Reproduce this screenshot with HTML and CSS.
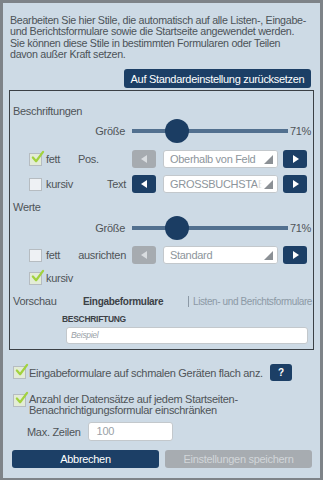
FILE: index.html
```html
<!DOCTYPE html>
<html>
<head>
    <title>Stile</title>
    <link rel="stylesheet" href="styles.css">
</head>
<body>
<div class="frame">
    <p class="intro">Bearbeiten Sie hier Stile, die automatisch auf alle Listen-, Eingabe-<br>und Berichtsformulare sowie die Startseite angewendet werden.<br>Sie können diese Stile in bestimmten Formularen oder Teilen<br>davon außer Kraft setzen.</p>
    <div class="reset-row"><button class="btn reset">Auf Standardeinstellung zurücksetzen</button></div>

    <div class="panel">
        <div class="title t1">Beschriftungen</div>
        <div class="slider-row s1">
            <span class="lbl">Größe</span>
            <div class="track"><span class="thumb"></span></div>
            <span class="pct">71%</span>
        </div>
        <div class="row r1">
            <label class="cb-wrap"><span class="cb checked"><svg viewBox="0 0 14 14"><path d="M2 7 L5.5 11 L13 1" /></svg></span>fett</label>
            <span class="lbl left">Pos.</span>
            <div class="ctl">
                <span class="nav off"><i class="tri-l"></i></span>
                <span class="select">Oberhalb von Feld</span>
                <span class="nav"><i class="tri-r"></i></span>
            </div>
        </div>
        <div class="row r2">
            <label class="cb-wrap"><span class="cb"></span>kursiv</label>
            <span class="lbl">Text</span>
            <div class="ctl">
                <span class="nav"><i class="tri-l"></i></span>
                <span class="select">GROSSBUCHSTABEN</span>
                <span class="nav"><i class="tri-r"></i></span>
            </div>
        </div>

        <div class="title t2">Werte</div>
        <div class="slider-row s2">
            <span class="lbl">Größe</span>
            <div class="track"><span class="thumb"></span></div>
            <span class="pct">71%</span>
        </div>
        <div class="row r3">
            <label class="cb-wrap"><span class="cb"></span>fett</label>
            <span class="lbl">ausrichten</span>
            <div class="ctl">
                <span class="nav off"><i class="tri-l"></i></span>
                <span class="select">Standard</span>
                <span class="nav"><i class="tri-r"></i></span>
            </div>
        </div>
        <div class="row r4">
            <label class="cb-wrap"><span class="cb checked"><svg viewBox="0 0 14 14"><path d="M2 7 L5.5 11 L13 1" /></svg></span>kursiv</label>
        </div>

        <div class="preview-tabs">
            <span class="pv-label">Vorschau</span>
            <span class="tab active">Eingabeformulare</span>
            <span class="tab">Listen- und Berichtsformulare</span>
        </div>
        <div class="pv-caption">BESCHRIFTUNG</div>
        <div class="pv-input">Beispiel</div>
    </div>

    <div class="opt o1">
        <span class="cb checked"><svg viewBox="0 0 14 14"><path d="M2 7 L5.5 11 L13 1" /></svg></span>
        <span class="opt-text">Eingabeformulare auf schmalen Geräten flach anz.</span>
        <button class="btn help">?</button>
    </div>
    <div class="opt o2">
        <span class="cb checked"><svg viewBox="0 0 14 14"><path d="M2 7 L5.5 11 L13 1" /></svg></span>
        <span class="opt-text">Anzahl der Datensätze auf jedem Startseiten-<br>Benachrichtigungsformular einschränken</span>
    </div>
    <div class="maxrows">
        <span>Max. Zeilen</span>
        <span class="num">100</span>
    </div>
    <div class="actions">
        <button class="btn">Abbrechen</button>
        <button class="btn disabled">Einstellungen speichern</button>
    </div>
</div>
</body>
</html>
```

FILE: styles.css
```css
body { margin: 0; font-family: "Liberation Sans", Arial, sans-serif; color: #4f5458; }
.frame { box-sizing: border-box; width: 323px; height: 480px; background: #cddae5; border: 3px solid #7e8388; border-bottom-width: 2px; padding: 12px 6px 0 6px; font-size: 11px; letter-spacing: -0.3px; white-space: nowrap; }
.intro { margin: 0; padding-left: 1px; font-size: 10.7px; letter-spacing: -0.3px; line-height: 11.3px; color: #4c5358; }
.reset-row { display: flex; justify-content: flex-end; margin-top: 9px; padding-right: 3px; }
.btn { font-family: inherit; font-size: 11px; letter-spacing: -0.3px; border: none; border-radius: 3px; background: #1c3f66; color: #fff; height: 18px; padding: 0 4px; white-space: nowrap; }
.reset { width: 187px; height: 19px; }

.panel { box-sizing: border-box; margin-top: 2px; border: 1px solid #3b4045; height: 260px; padding: 13px 0 0 3px; }
.title { height: 14px; line-height: 14px; }
.t2 { margin-top: 7px; }

.slider-row { display: flex; align-items: center; height: 24px; margin-top: 1px; }
.s2 { margin-top: 2px; }
.slider-row .lbl { width: 119px; text-align: right; padding-right: 7px; box-sizing: border-box; }
.track { position: relative; width: 156px; height: 4px; background: #52708f; }
.thumb { position: absolute; left: 33px; top: -10px; width: 24px; height: 24px; border-radius: 50%; background: #1b3d63; }
.pct { width: 23px; text-align: right; }

.row { display: flex; align-items: center; height: 18px; margin-top: 7px; }
.r1 { margin-top: 7px; }
.r3 { margin-top: 6px; }
.r4 { height: 14px; }
.cb-wrap { display: flex; align-items: center; width: 65px; padding-left: 16px; box-sizing: border-box; }
.cb { position: relative; display: inline-block; width: 11px; height: 11px; background: #eef1f4; border: 1px solid #b6bcc1; margin-right: 4px; flex: none; }
.cb.checked { background: #e3ecd6; }
.cb svg { position: absolute; left: 1px; top: -3px; width: 13px; height: 13px; overflow: visible; }
.cb path { fill: none; stroke: #a2d23e; stroke-width: 2.4; stroke-linecap: round; stroke-linejoin: round; }
.row .lbl { width: 48px; text-align: right; }
.row .lbl.left { text-align: left; }
.ctl { display: flex; align-items: center; margin-left: 6px; }
.nav { display: flex; align-items: center; justify-content: center; width: 24px; height: 18px; border-radius: 3px; background: #1c3f66; }
.nav.off { background: #a6abb0; }
.tri-l { width: 0; height: 0; border-top: 4px solid transparent; border-bottom: 4px solid transparent; border-right: 6px solid #fff; }
.tri-r { width: 0; height: 0; border-top: 4px solid transparent; border-bottom: 4px solid transparent; border-left: 6px solid #fff; margin-left: 1px; }
.nav.off .tri-l { border-right-color: #d9dde0; }
.select { position: relative; box-sizing: border-box; width: 115px; height: 18px; margin: 0 5px 0 7px; padding: 0 0 0 6px; background: #fff; border: 1px solid #c3c8cc; border-radius: 3px; color: #8d959c; line-height: 16px; overflow: hidden; }
.select::after { content: ""; position: absolute; right: 0; top: 0; width: 20px; height: 16px; background: linear-gradient(to right, rgba(255,255,255,0.3), #fff 5px); }
.select::before { content: ""; position: absolute; z-index: 1; right: 4px; bottom: 3px; border-left: 9px solid transparent; border-bottom: 9px solid #8b9095; }

.preview-tabs { display: flex; align-items: center; height: 14px; margin-top: 9px; }
.pv-label { width: 70px; }
.tab { font-size: 10px; color: #8c99a6; }
.tab.active { width: 105px; font-weight: bold; color: #3c4146; }
.tab + .tab { border-left: 1px solid #8c99a6; padding-left: 4px; line-height: 11px; letter-spacing: -0.4px; }
.pv-caption { margin: 6px 0 0 49px; height: 10px; line-height: 10px; font-size: 8.5px; font-weight: bold; color: #3c4146; }
.pv-input { box-sizing: border-box; margin: 3px 0 0 53px; width: 242px; height: 17px; padding-left: 4px; background: #fff; border: 1px solid #c3c8cc; border-radius: 3px; font-size: 8.5px; font-style: italic; line-height: 15px; color: #9aa1a7; }

.opt { display: flex; align-items: center; padding-left: 4px; }
.o1 { height: 19px; margin-top: 13px; }
.o1 .help { margin-left: 7px; width: 22px; padding: 0; height: 17px; font-weight: bold; font-size: 10px; }
.o2 { align-items: flex-start; margin-top: 12px; line-height: 11px; }
.opt .cb { margin-right: 3px; }
.maxrows { display: flex; align-items: center; height: 19px; margin-top: 6px; padding-left: 18px; }
.num { box-sizing: border-box; width: 85px; height: 19px; margin-left: 7px; padding-left: 8px; background: #fff; border: 1px solid #c3c8cc; border-radius: 3px; line-height: 17px; color: #9aa1a7; }
.actions { display: flex; gap: 6px; margin-top: 9px; padding-left: 3px; }
.actions .btn { width: 147px; height: 18px; }
.actions .disabled { background: #a7acb1; color: #d2d6d9; }
```
